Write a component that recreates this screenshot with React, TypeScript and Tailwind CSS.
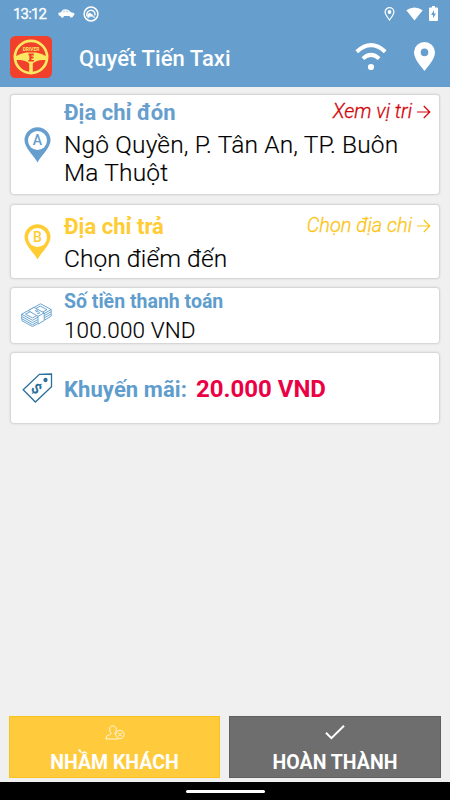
import type { ReactNode } from 'react';

const BLUE = '#5f9dcd';

function StatusBar() {
  return (
    <div className="flex h-[27px] items-center pl-[13px] pr-[12px] text-white">
      <span className="w-[33px] text-[15px] leading-[28px] tracking-[-0.85px] [-webkit-text-stroke:0.3px_white]">13:12</span>
      <svg className="ml-[12px] h-[9px] w-[17px]" viewBox="0 0 17 9" fill="white">
        <path d="M.5 3.8 3 3.2 4.8.7Q7-.1 10 .8l3 2.5 2.8.7Q17 5 16 6.5l-1 .3A1.7 1.7 0 0 1 11.6 7H6A1.7 1.7 0 0 1 2.6 7L.5 6.2Z" />
        <path d="M4.4 3.2 5.4 1.5H7v1.8ZM7.8 1.5H9.5L11 3.3H7.8Z" fill="#669ecd" opacity=".35" />
      </svg>
      <svg className="ml-[8px] size-[16px]" viewBox="0 0 16 16" fill="none" stroke="white">
        <circle cx="8" cy="8" r="6.9" strokeWidth="1.5" />
        <path d="M4.4 10.5A4.1 4.1 0 1 1 11.9 9.3" strokeWidth="1.4" />
        <path d="M4.8 11.8V8.600Q6 6.200 8 7.600L12 11.600Q8 9 4.800 11.800Z" fill="white" strokeWidth=".6" />
      </svg>
      <svg className="ml-auto h-[14px] w-[11px]" viewBox="0 0 11 14" fill="none" stroke="white">
        <path d="M5.5 13C4.6 11.5 1.1 8 1.1 5.1a4.4 4.4 0 0 1 8.8 0C9.9 8 6.4 11.5 5.5 13Z" strokeWidth="1.2" />
        <circle cx="5.5" cy="5" r="1.9" fill="white" stroke="none" />
      </svg>
      <svg className="ml-[11px] h-[14px] w-[17px]" viewBox="0 0 17 14" fill="white">
        <path d="M.3 3.3Q8.5-2.5 16.7 3.3L8.5 13.6Z" />
      </svg>
      <svg className="ml-[6px] h-[15px] w-[9px]" viewBox="0 0 9 15" fill="white">
        <path d="M3 0h3v1.5h2q1 0 1 1V14q0 1-1 1H1q-1 0-1-1V2.5q0-1 1-1h2Z" />
        <path d="M5 4.2 2 9h2v3.2L7 7.5H5Z" fill="#669ecd" />
      </svg>
    </div>
  );
}

function Logo() {
  return (
    <svg className="size-[42px]" viewBox="0 0 42 42">
      <rect width="42" height="42" rx="5.5" fill="#f1402b" />
      <circle cx="21" cy="21" r="16.1" fill="none" stroke="#fbe862" strokeWidth="2.7" />
      <path d="M5.500 20.500Q10 17.600 16 16.600h10q6 1 10.500 3.900v3.500h-4q-6 .2-9.700 3.600V37h-3.600V27.600Q15.500 24.200 9.500 24h-4Z" fill="#fbe862" />
      <path d="M18.500 17.500H23.800V19.600H21.500V20.600H23.500V22.500H21.500V24H24V25.500H18.300V24H19.300V19.600H18.500Z" fill="#f1402b" />
      <text x="21" y="14.900" textAnchor="middle" textLength="16.500" fontSize="4.800" fontWeight="700" fill="#fbe862">DRIVER</text>
    </svg>
  );
}

function Header() {
  return (
    <header className="flex h-[60px] items-start pl-[10px] pr-[15px] pt-[9px]">
      <Logo />
      <h1 className="ml-[27px] mt-[7px] text-[22px] leading-[31px] font-medium tracking-[0.07px] whitespace-nowrap text-white">Quyết Tiến Taxi</h1>
      <svg className="ml-auto mt-[6px] h-[29px] w-[32px]" viewBox="0 0 32 29" fill="none" stroke="white" strokeWidth="4">
        <path d="M1.8 9.700Q16-3.400 30.200 9.700M7.900 16.600Q16 9.100 24.100 16.600" />
        <circle cx="16" cy="25" r="3.100" fill="white" stroke="none" />
      </svg>
      <svg className="ml-[27px] mt-[6px] h-[29px] w-[21px]" viewBox="0 0 21 29" fill="white">
        <path fillRule="evenodd" d="M10.500 29C8 25.500 0 17.500 0 10.300a10.500 10.300 0 0 1 21 0C21 17.500 13 25.500 10.500 29ZM10.500 6.600a3.800 3.800 0 1 0 0 7.600 3.800 3.800 0 0 0 0-7.600Z" />
      </svg>
    </header>
  );
}

function Marker({ letter, color }: { letter: string; color: string }) {
  return (
    <svg className="h-[36px] w-[27px]" viewBox="0 0 27 36">
      <path d="M13.500 35.500C11 30 .5 21 .5 13.300a13 13 0 0 1 26 0C26.500 21 16 30 13.500 35.500Z" fill={color} />
      <circle cx="13.500" cy="13.500" r="9.500" fill="white" />
      <text x="13.500" y="18.400" textAnchor="middle" fontSize="14" fontWeight="500" fill={color}>{letter}</text>
    </svg>
  );
}

function MoneyIcon() {
  return (
    <svg className="mr-[3px] mb-[1px] h-[24px] w-[31px]" viewBox="0 0 31 24" fill="none" stroke={BLUE} strokeWidth=".9" strokeLinejoin="round">
      <path d="M.7 11.200 19.500.8 30.200 6.500 11.500 17.300ZM4.500 11.200 19.300 3.100 26 6.700 11.600 14.900Z" />
      <path d="M.7 11.200v2.200l10.800 6.200 5-2.900M.7 13.400v2.200l10.800 6.200 5-2.900M1 15.700v2.100L11.500 23.500l5-2.800M30.200 6.500v2.200l-7 4M30.200 8.700v2.200l-7 4M30.200 11v2.200l-7 4" />
      <path d="M7.200 7.600 17 13.300v7.900l6.200-3.600V9.900L13 4.400Z" fill="white" />
      <path d="m17 13.300 6.200-3.400M17 7.200q-2.500-.7-2.600.6c0 1.500 4.200.4 4.200 1.900 0 1.200-1.800 1.300-2.800.5" />
    </svg>
  );
}

function TagIcon() {
  return (
    <svg className="h-[30px] w-[31px]" viewBox="0 0 31 30" fill="none" stroke="#286f9b" strokeWidth="1.300">
      <path d="M1.200 16.800 17.400 1.300 29.500 1v12.800L13.400 29Z" />
      <circle cx="23.500" cy="7" r="1.500" fill="#286f9b" />
      <g transform="rotate(43 14.500 15.500)">
        <text x="14.500" y="20.600" textAnchor="middle" fontSize="14.500" fontWeight="700" fill="#286f9b" stroke="none">$</text>
      </g>
    </svg>
  );
}

function Arrow() {
  return (
    <svg className="h-[14px] w-[14px]" viewBox="0 0 14 14" fill="none" stroke="currentColor" strokeWidth="1.200">
      <path d="M0 7h12.800M6.800 1l6 6-6 6" />
    </svg>
  );
}

function Card({ className, icon, children }: { className: string; icon: ReactNode; children: ReactNode }) {
  return (
    <section className={`flex rounded-[3px] bg-white shadow-[0_0_2px_1px_#cfcfcf] ${className}`}>
      <div className="flex w-[53px] shrink-0 items-center justify-center">{icon}</div>
      <div className="min-w-0 flex-1">{children}</div>
    </section>
  );
}

export default function App() {
  return (
    <div className="flex h-[800px] w-[450px] flex-col overflow-hidden bg-[#f0f0f0] font-[Roboto,'Noto_Sans',sans-serif]">
      <div className="bg-[#669ecd]">
        <StatusBar />
        <Header />
      </div>
      <main className="flex flex-1 flex-col px-[11px] pt-[8px]">
        <Card className="h-[99px]" icon={<Marker letter="A" color="#669ecd" />}>
          <div className="flex items-start justify-between pr-[8px] pt-[4px]">
            <h2 className="text-[22px] leading-[28px] font-bold text-[#669ecd]">Địa chỉ đón</h2>
            <a className="flex items-center gap-[5px] text-[20px] leading-[25px] font-light text-[#d40509] italic [-webkit-text-stroke:0.3px_#d40509]">Xem vị tri<Arrow /></a>
          </div>
          <p className="mt-[4px] text-[24.5px] leading-[28px] font-light tracking-[0.15px] text-black [-webkit-text-stroke:0.15px_black]">Ngô Quyền, P. Tân An, TP. Buôn<br />Ma Thuột</p>
        </Card>
        <Card className="mt-[11px] h-[73px]" icon={<Marker letter="B" color="#ffcc33" />}>
          <div className="flex items-start justify-between pr-[8px] pt-[8px]">
            <h2 className="text-[22px] leading-[28px] font-bold text-[#ffcc33]">Địa chỉ trả</h2>
            <a className="flex items-center gap-[5px] text-[20px] leading-[25px] font-light text-[#fcc516] italic [-webkit-text-stroke:0.3px_#fcc516]">Chọn địa chi<Arrow /></a>
          </div>
          <p className="mt-[4px] text-[24.5px] leading-[28px] font-light tracking-[0.05px] text-black [-webkit-text-stroke:0.15px_black]">Chọn điểm đến</p>
        </Card>
        <Card className="mt-[10px] h-[55px]" icon={<MoneyIcon />}>
          <h2 className="pt-[1px] text-[19.5px] leading-[26px] font-bold text-[#5f9dcd]">Số tiền thanh toán</h2>
          <p className="mt-[1px] text-[22.5px] leading-[28px] font-light tracking-[0.12px] text-black [-webkit-text-stroke:0.15px_black]">100.000 VND</p>
        </Card>
        <Card className="mt-[10px] h-[70px]" icon={<TagIcon />}>
          <div className="flex items-baseline gap-[9px] pt-[21px]">
            <h2 className="text-[22px] leading-[30px] font-bold tracking-[0.08px] text-[#5f9dcd]">Khuyến mãi:</h2>
            <span className="text-[24px] leading-[30px] font-bold text-[#eb0045]">20.000 VND</span>
          </div>
        </Card>
      </main>
      <footer className="flex gap-[9px] px-[9px] pb-[4px]">
        <button className="flex h-[62px] w-[211px] flex-col items-center border border-[#fac21e] bg-[#ffcb3c] pt-[8px] text-white">
          <svg className="h-[15px] w-[20px]" viewBox="0 0 20 15" fill="none" stroke="white" strokeWidth=".8">
            <path d="M13 14H.8Q.8 10.200 4.500 9.700L6.300 8.500Q4.300 6.500 4.600 4C4.900-.2 11-.2 11.300 4Q11.400 6.500 9.600 8.500L11 9.600" />
            <circle cx="15" cy="9.500" r="4.200" /><path d="m13 7.500 4 4m0-4-4 4" />
          </svg>
          <span className="mt-[9px] text-[19.5px] leading-[28px] font-bold">NHẦM KHÁCH</span>
        </button>
        <button className="flex h-[62px] w-[212px] flex-col items-center border border-[#606060] bg-[#6e6e6e] pt-[8px] text-white">
          <svg className="h-[15px] w-[20px]" viewBox="0 0 20 15" fill="none" stroke="white" strokeWidth="2">
            <path d="m1 7.800 5.400 5.400L19 .8" />
          </svg>
          <span className="mt-[9px] text-[19.5px] leading-[28px] font-bold">HOÀN THÀNH</span>
        </button>
      </footer>
      <div className="flex h-[18px] justify-center bg-black pt-[8px]">
        <div className="h-[3px] w-[79px] rounded-full bg-white" />
      </div>
    </div>
  );
}
